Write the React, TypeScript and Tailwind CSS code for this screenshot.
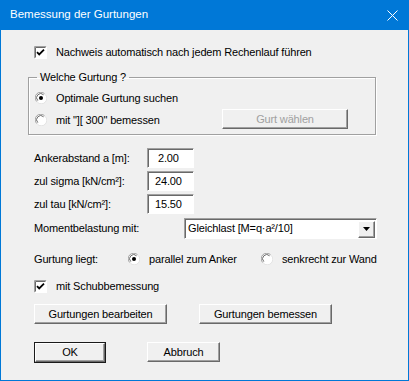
import React from "react"

const font = { fontFamily: '"Liberation Sans", Arial, sans-serif' }

function CheckBox() {
  return (
    <svg width="13" height="13" viewBox="0 0 13 13" className="shrink-0">
      <rect x="0" y="0" width="13" height="13" fill="#fff" />
      <path d="M0.5 12.5V0.5H12.5" stroke="#a0a0a0" fill="none" />
      <path d="M1.5 11.5V1.5H11.5" stroke="#696969" fill="none" />
      <path d="M0.5 12.5H12.5V0.5" stroke="#fff" fill="none" />
      <path d="M3 6.2L5.2 8.4L10 3.6" stroke="#000" strokeWidth="1.8" fill="none" />
    </svg>
  )
}

function Radio({ on }: { on?: boolean }) {
  return (
    <svg width="12" height="12" viewBox="0 0 12 12" className="shrink-0">
      <circle cx="6" cy="6" r="5.5" fill="#fff" />
      <path d="M1.8 9.6A5.2 5.2 0 0 1 9.6 1.8" stroke="#a0a0a0" fill="none" />
      <path d="M2.8 8.6A4 4 0 0 1 8.6 2.8" stroke="#696969" fill="none" />
      <path d="M10.2 2.4A5.2 5.2 0 0 1 2.4 10.2" stroke="#e3e3e3" fill="none" />
      {on && <circle cx="6" cy="6" r="2" fill="#000" />}
    </svg>
  )
}

function Btn({ children, w, disabled }: { children: React.ReactNode; w: string; disabled?: boolean }) {
  return (
    <div
      className={`${w} h-[20px] shrink-0 flex items-center justify-center bg-[#f0f0f0] border border-t-white border-l-white border-r-[#696969] border-b-[#696969] shadow-[inset_-1px_-1px_0_#a0a0a0] ${disabled ? "text-[#a0a0a0]" : "text-black"}`}
    >
      {children}
    </div>
  )
}

function Field({ value, pad }: { value: string; pad?: string }) {
  return (
    <div className="w-[47px] h-[20px] bg-white border border-t-[#a0a0a0] border-l-[#a0a0a0] border-r-white border-b-white shadow-[inset_1px_1px_0_#696969] flex items-center">
      <span className={pad ?? "pl-[7px]"}>{value}</span>
    </div>
  )
}

export default function App() {
  return (
    <div className="w-[409px] h-[381px] bg-[#0078d7] flex flex-col text-[11px] tracking-[-0.15px] text-black" style={font}>
      {/* TITLE BAR */}
      <div className="h-[30px] flex items-center justify-between pl-[10px] pr-[11px] text-white text-[11.5px] tracking-normal">
        <span>Bemessung der Gurtungen</span>
        <svg width="11" height="11" viewBox="0 0 11 11">
          <path d="M0.5 0.5L10.5 10.5M10.5 0.5L0.5 10.5" stroke="#fff" strokeWidth="1" />
        </svg>
      </div>

      {/* BODY */}
      <div className="flex-1 mx-px mb-px bg-[#f0f0f0] flex flex-col">
        <div className="mt-[16px] ml-[33px] h-[13px] flex items-center gap-[9px]">
          <CheckBox />
          <span>Nachweis automatisch nach jedem Rechenlauf führen</span>
        </div>

        {/* GROUP */}
        <fieldset className="mt-[11px] ml-[27px] w-[348px] border border-[#a0a0a0] shadow-[1px_1px_0_#fff,inset_1px_1px_0_#fff] pb-[5px]">
          <legend className="ml-[8px] px-[3px] h-[14px] leading-[14px]">Welche Gurtung ?</legend>
          <div className="mt-[5px] ml-[6px] h-[18px] flex items-center gap-[9px]">
            <Radio on />
            <span>Optimale Gurtung suchen</span>
          </div>
          <div className="mt-[2px] ml-[6px] h-[20px] flex items-center">
            <div className="flex items-center gap-[9px] w-[187px] pt-[2px]">
              <Radio />
              <span>mit "][ 300" bemessen</span>
            </div>
            <Btn w="w-[126px]" disabled>Gurt wählen</Btn>
          </div>
        </fieldset>

        {/* INPUTS */}
        <div className="mt-[13px] ml-[33px] flex flex-col gap-[3px]">
          <div className="h-[20px] flex items-center">
            <span className="w-[113px]">Ankerabstand a [m]:</span>
            <Field value="2.00" pad="pl-[10px]" />
          </div>
          <div className="h-[20px] flex items-center">
            <span className="w-[113px]">zul sigma [kN/cm²]:</span>
            <Field value="24.00" />
          </div>
          <div className="h-[20px] flex items-center">
            <span className="w-[113px]">zul tau [kN/cm²]:</span>
            <Field value="15.50" />
          </div>
        </div>

        <div className="mt-[4px] ml-[33px] h-[21px] flex items-center">
          <span className="w-[150px]">Momentbelastung mit:</span>
          <div className="w-[193px] h-[21px] bg-white border border-t-[#a0a0a0] border-l-[#a0a0a0] border-r-white border-b-white shadow-[inset_1px_1px_0_#696969] flex items-center">
            <span className="flex-1 pl-[3px]">Gleichlast [M=q·a²/10]</span>
            <div className="w-[17px] h-[17px] mr-px mt-px flex items-center justify-center bg-[#f0f0f0] border border-t-white border-l-white border-r-[#696969] border-b-[#696969] shadow-[inset_-1px_-1px_0_#a0a0a0]">
              <svg width="7" height="4" viewBox="0 0 7 4">
                <path d="M0 0H7L3.5 4Z" fill="#000" />
              </svg>
            </div>
          </div>
        </div>

        <div className="mt-[11px] ml-[33px] h-[18px] flex items-center">
          <span className="w-[94px]">Gurtung liegt:</span>
          <div className="flex items-center gap-[9px] w-[133px]">
            <Radio on />
            <span>parallel zum Anker</span>
          </div>
          <div className="flex items-center gap-[9px]">
            <Radio />
            <span>senkrecht zur Wand</span>
          </div>
        </div>

        <div className="mt-[12px] ml-[33px] h-[13px] flex items-center gap-[9px]">
          <CheckBox />
          <span>mit Schubbemessung</span>
        </div>

        <div className="mt-[11px] ml-[33px] flex gap-[32px]">
          <Btn w="w-[133px]">Gurtungen bearbeiten</Btn>
          <Btn w="w-[133px]">Gurtungen bemessen</Btn>
        </div>

        <div className="mt-[18px] ml-[33px] flex gap-[41px]">
          <div className="w-[72px] h-[21px] border border-[#1a1a1a]">
            <div className="h-full flex items-center justify-center border border-t-white border-l-white border-r-[#696969] border-b-[#696969] shadow-[inset_-1px_-1px_0_#a0a0a0]">
              OK
            </div>
          </div>
          <Btn w="w-[73px]">Abbruch</Btn>
        </div>
      </div>
    </div>
  )
}
